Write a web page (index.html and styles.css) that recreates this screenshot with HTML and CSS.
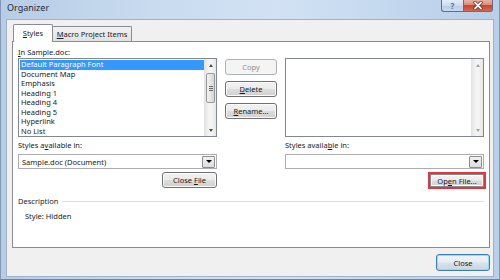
FILE: index.html
```html
<!DOCTYPE html>
<html>
<head>
<meta charset="utf-8">
<link rel="stylesheet" href="styles.css">
</head>
<body>
<div class="window">
  <div class="titlebar">
    <span class="title">Organizer</span>
    <div class="controls">
      <div class="ctl help">?</div>
      <div class="ctl close">
        <svg width="12" height="9" viewBox="0 0 12 9"><path d="M3 1.5 L9 7.5 M9 1.5 L3 7.5" stroke="#5a2218" stroke-width="3.2" stroke-linecap="round"/><path d="M3 1.5 L9 7.5 M9 1.5 L3 7.5" stroke="#fff" stroke-width="1.8" stroke-linecap="round"/></svg>
      </div>
    </div>
  </div>
  <div class="client">
    <div class="tabs">
      <div class="tab active"><span><u>S</u>tyles</span></div>
      <div class="tab"><span><u>M</u>acro Project Items</span></div>
    </div>
    <div class="panel">
      <div class="cols">
        <div class="col">
          <div class="lbl"><u>I</u>n Sample.doc:</div>
          <div class="listbox">
            <ul class="items">
              <li class="sel">Default Paragraph Font</li>
              <li>Document Map</li>
              <li>Emphasis</li>
              <li>Heading 1</li>
              <li>Heading 4</li>
              <li>Heading 5</li>
              <li>Hyperlink</li>
              <li>No List</li>
            </ul>
            <div class="vscroll">
              <span class="arr up"></span>
              <div class="track"><div class="thumb"><i></i><i></i><i></i></div></div>
              <span class="arr down"></span>
            </div>
          </div>
          <div class="lbl lbl2">Styles a<u>v</u>ailable in:</div>
          <div class="combo"><span class="val">Sample.doc (Document)</span><span class="drop"></span></div>
          <div class="btnrow"><button class="btn w55"><span>Close <u>F</u>ile</span></button></div>
        </div>
        <div class="mid">
          <button class="btn mbtn disabled"><span>Copy</span></button>
          <button class="btn mbtn"><span><u>D</u>elete</span></button>
          <button class="btn mbtn"><span><u>R</u>ename...</span></button>
        </div>
        <div class="col">
          <div class="lbl">&nbsp;</div>
          <div class="listbox">
            <ul class="items"></ul>
            <div class="vscroll off">
              <span class="arr up"></span>
              <div class="track"></div>
              <span class="arr down"></span>
            </div>
          </div>
          <div class="lbl lbl2">Styles availa<u>b</u>le in:</div>
          <div class="combo"><span class="val"></span><span class="drop"></span></div>
          <div class="btnrow"><button class="btn hl"><span>Op<u>e</u>n File...</span></button></div>
        </div>
      </div>
      <div class="desc">
        <span>Description</span><span class="rule"></span>
      </div>
      <div class="desctext">Style: Hidden</div>
    </div>
    <div class="footer">
      <button class="btn default"><span>Close</span></button>
    </div>
  </div>
</div>
</body>
</html>
```
FILE: styles.css
```css
* { box-sizing: border-box; }
html, body { margin: 0; padding: 0; }
body {
  width: 500px; height: 280px; overflow: hidden;
  font-family: "Noto Sans", "Open Sans", sans-serif;
  font-size: 7.5px; color: #1a1a1a;
  background: #bcd2ea;
}
u { text-decoration: underline; text-underline-offset: 1px; }
.window {
  width: 500px; height: 280px;
  display: flex; flex-direction: column;
  border-left: 1px solid #8299b3;
  border-right: 1px solid #8299b3;
  border-bottom: 1px solid #6f86a0;
  background: linear-gradient(90deg, #b7cde6 0%, #c8dbef 30%, #d2e2f4 55%, #c2d7ee 80%, #b9cfe8 100%);
  padding: 0 5px 2px 5px;
}
.titlebar {
  height: 19px; flex: none;
  display: flex; align-items: flex-start; justify-content: space-between;
  margin: 0 -5px;
}
.title {
  padding-left: 6px; line-height: 16px; font-size: 9px; color: #1c2b3c;
}
.controls { display: flex; margin-right: 6px; }
.ctl {
  height: 12px; display: flex; align-items: center; justify-content: center;
  border: 1px solid #5d7089; border-top: none;
}
.help {
  width: 22px; border-radius: 0 0 0 3px; border-right: none;
  background: linear-gradient(#e3edf8 0%, #cddcee 50%, #b7cbe2 51%, #c9dbef 100%);
  color: #5b6f87; font-size: 8px; font-weight: bold;
}
.close {
  width: 30px; border-radius: 0 0 3px 0;
  background: linear-gradient(#eab1a3 0%, #de8a74 45%, #c9452f 50%, #d6684e 100%);
}
.client {
  flex: 1; display: flex; flex-direction: column;
  background: #f0f0f0;
  border: 1px solid #9fb2c8;
  padding: 4px 3px 5px 5px;
}
.tabs { display: flex; height: 17px; padding-left: 1px; align-items: flex-end; }
.tab {
  height: 15px; border: 1px solid #898c95; border-bottom: none;
  background: linear-gradient(#f2f2f2, #e1e1e1);
  display: flex; align-items: center; justify-content: center;
  border-radius: 2px 2px 0 0;
}
.tab.active {
  width: 40px; height: 18px; background: #fff; position: relative; z-index: 2;
  margin-bottom: -1px; padding-bottom: 1px;
}
.tab:not(.active) { width: 80px; margin-left: -1px; }
.panel {
  height: 207px; background: #fff; border: 1px solid #898c95;
  padding: 4px 4px 0 5px;
}
.cols { display: grid; grid-template-columns: 199px 52px 199px; column-gap: 8px; }
.col { display: flex; flex-direction: column; }
.lbl { line-height: 12px; height: 12px; white-space: nowrap; }
.lbl2 { height: 15px; line-height: 13px; margin-top: 2px; }
.listbox {
  height: 79px; border: 1px solid #828790; display: flex; background: #fff;
}
.items { list-style: none; margin: 0; padding: 1px 0 0 1px; flex: 1; }
.items li { line-height: 9.5px; height: 9.5px; padding-left: 1px; white-space: nowrap; }
.items li.sel { background: #3399ff; color: #fff; }
.vscroll {
  width: 12px; display: flex; flex-direction: column; align-items: stretch;
  background: linear-gradient(90deg, #e6e6e6, #f4f4f4 40%, #f4f4f4 60%, #e6e6e6);
  border-left: 1px solid #e3e3e3;
}
.arr { height: 12px; flex: none; display: flex; align-items: center; justify-content: center; }
.arr::before {
  content: ""; width: 0; height: 0;
  border-left: 2.5px solid transparent; border-right: 2.5px solid transparent;
}
.arr.up::before { border-bottom: 3px solid #4d4d4d; }
.arr.down::before { border-top: 3px solid #4d4d4d; }
.vscroll.off .arr.up::before { border-bottom-color: #a3a3a3; }
.vscroll.off .arr.down::before { border-top-color: #a3a3a3; }
.track { flex: 1; padding-top: 2px; }
.thumb {
  height: 30px; margin: 0 1px; border: 1px solid #979797; border-radius: 2px;
  background: linear-gradient(90deg, #f3f3f3, #e6e6e6 50%, #d6d6d6);
  display: flex; flex-direction: column; align-items: center; justify-content: center; gap: 1px;
}
.thumb i { display: block; width: 4px; height: 1px; background: #666; }
.combo {
  height: 15px; border: 1px solid #abadb3; background: #fff;
  display: flex; align-items: center; justify-content: space-between;
  padding: 0 1px 0 3px;
}
.drop {
  width: 13px; height: 12px; border: 1px solid #8c8c8c; border-radius: 1px;
  background: linear-gradient(#f2f2f2, #dcdcdc);
  display: flex; align-items: center; justify-content: center;
}
.drop::before {
  content: ""; border-left: 3px solid transparent; border-right: 3px solid transparent;
  border-top: 3px solid #000;
}
.btnrow { display: flex; justify-content: flex-end; margin-top: 3px; }
.btn {
  font: inherit; color: #1a1a1a; height: 16px; padding: 0;
  border: 1px solid #707070; border-radius: 3px;
  background: linear-gradient(#f2f2f2 0%, #ebebeb 48%, #dddddd 52%, #cfcfcf 100%);
  box-shadow: inset 0 0 0 1px #fbfbfb;
  display: flex; align-items: center; justify-content: center;
  white-space: nowrap;
}
.w55 { width: 55px; }
.btn.hl {
  width: 58px; height: 17px; margin-right: -2px;
  border: 2px solid #e1363c; border-radius: 0;
  box-shadow: inset 0 0 0 1px #8a8a8a, inset 0 0 0 2px #fafafa;
}
.mid { display: flex; flex-direction: column; padding-top: 13px; gap: 6px; }
.mbtn { width: 52px; }
.btn.disabled { border-color: #adb2b5; background: #f4f4f4; color: #8d8d8d; box-shadow: none; }
.desc { display: flex; align-items: center; margin-top: 7px; line-height: 10px; color: #1e1e1e; }
.desc .rule { flex: 1; height: 1px; background: #d5dfe5; margin: 1px 1px 0 4px; }
.desctext { padding-left: 7px; line-height: 10px; margin-top: 5px; }
.footer { display: flex; justify-content: flex-end; padding-top: 6px; }
.btn.default {
  width: 54px; height: 17px; margin-right: 0;
  border-color: #3c7fb1;
  box-shadow: inset 0 0 0 1px #90dcf3;
  background: linear-gradient(#eef4f8 0%, #e6edf3 48%, #d9e2ea 52%, #ccd6df 100%);
}
```
